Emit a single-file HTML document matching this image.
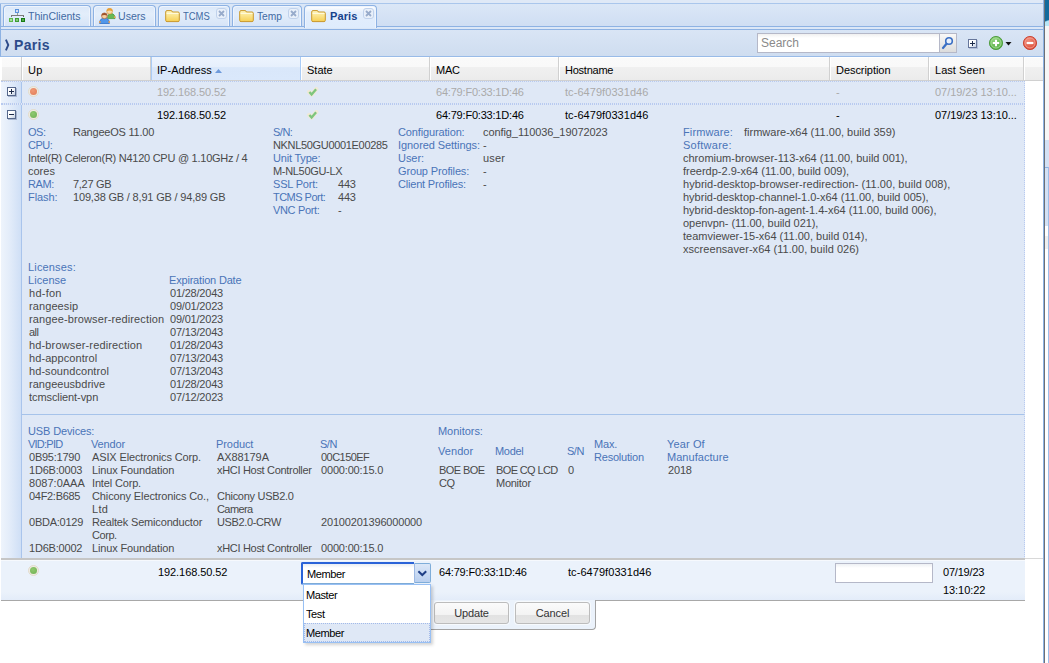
<!DOCTYPE html>
<html>
<head>
<meta charset="utf-8">
<title>Paris</title>
<style>
*{box-sizing:border-box;margin:0;padding:0}
html,body{width:1049px;height:663px;overflow:hidden;background:#fff;font-family:"Liberation Sans",sans-serif;font-size:11px;color:#000}
.abs{position:absolute}
#root{position:absolute;left:0;top:0;width:1049px;height:663px;overflow:hidden;background:#fff}
/* tab strip */
#tabhead{left:0;top:0;width:1044px;height:27px;background:#dfe9f7}
#tabline{left:0;top:3px;width:1044px;height:1px;background:#a9c6ec}
#tabstrip{left:0;top:4px;width:1044px;height:22px;background:linear-gradient(#dbe7f7,#cfdef3);border-left:1px solid #8db2e3}
#tabbot{left:0;top:26px;width:1044px;height:4px;background:#dbe7f7;border-top:1px solid #8db2e3;border-bottom:1px solid #8db2e3;border-left:1px solid #8db2e3}
.tab{position:absolute;top:5px;height:21px;border:1px solid #8db2e3;border-bottom:none;border-radius:4px 4px 0 0;background:linear-gradient(#dbe8f9,#e3eefb 40%,#d6e4f7);box-shadow:inset 1px 1px 0 #eef4fd,inset -1px 0 0 #eef4fd;color:#416aa3;font-size:11px;white-space:nowrap}
.tab.active{height:23px;background:linear-gradient(#ffffff,#e3eefc 30%,#deecfd);color:#15428b;font-weight:bold;z-index:3}
.tab .tx{position:absolute;top:4px;display:inline-block;transform-origin:0 0}
.tab svg{position:absolute}
.tclose{position:absolute;top:2px;width:11px;height:11px;border:1px solid #c0d2ec;border-radius:3px;background:#e9f0fa}
/* title bar */
#titlebar{left:0;top:30px;width:1044px;height:27px;background:linear-gradient(#d9e5f5,#cfddf0);border-left:1px solid #8db2e3;border-bottom:1px solid #99bbe8}
#title{left:14px;top:36.5px;font-size:14px;font-weight:bold;color:#2d4b8a;letter-spacing:0.3px;word-spacing:-0.5px}
/* header */
#ghead{left:1px;top:57px;width:1043px;height:24px;background:linear-gradient(#fff 0,#fff 1px,#fafafa 1px,#f9f9f9 10px,#f0f0f0 10.5px,#ebebeb 23px);border-bottom:1px solid #d0d0d0}
.hc{position:absolute;top:57px;height:23px;border-left:1px solid #fff;border-right:1px solid #d0d0d0;padding:6px 0 0 5px;font-size:11px;color:#000;white-space:nowrap}
.hc.sort{background:linear-gradient(#edf4fe 0%,#e6effc 44%,#d9e7fa 46%,#dae8fb 100%);border-left:1px solid #aaccf6;border-right:1px solid #aaccf6}

/* toolbar */
#search{left:757px;top:33px;width:183px;height:20px;background:linear-gradient(#f0f0f0,#fff 4px);border:1px solid #b5b8c8;color:#8a8a8a;font-size:12px;padding:2px 0 0 3px}
#strig{left:940px;top:33px;width:17px;height:20px;border:1px solid #b5b8c8;border-left:none;background:linear-gradient(#f8f8f8,#dcdcdc)}
/* grid */
.row{position:absolute;left:1px;width:1024px;background:#dfe8f6;border-top:1px dotted #b8caf0;border-bottom:1px dotted #b8caf0;border-right:1px dotted #b8caf0}
.exp{position:absolute;left:1px;width:21px;background:linear-gradient(90deg,#eef4fc,#e4edfa 40%,#cfdff6);border-right:1px solid #a9c4ec}
.pm{position:absolute;left:7px;width:9px;height:9px;border:1px solid #56688c;background:linear-gradient(135deg,#fff 40%,#c3cfe2);box-shadow:1px 1px 0 #a9b6cf}
.pm:before{content:"";position:absolute;left:1px;top:3px;width:5px;height:1px;background:#1d2b4a}
.pm.plus:after{content:"";position:absolute;left:3px;top:1px;width:1px;height:5px;background:#1d2b4a}
.dot{position:absolute;width:11px;height:11px;border-radius:50%;border:1px solid #e3dccb;background:#efece4}
.dot i{position:absolute;left:1px;top:1px;width:7px;height:7px;border-radius:50%}
.dot.o i{background:radial-gradient(circle at 40% 35%,#f09a77,#e07a55)}
.dot.g i{background:radial-gradient(circle at 40% 35%,#8fc86e,#6fb052)}
.t{position:absolute;z-index:2;white-space:nowrap;font-size:11px;line-height:13px;color:#000}
.gry{color:#aaa}
.l{color:#4a74b8}
.v{color:#4a4a4a}
.chk{position:absolute}

.btn{position:absolute;width:75px;height:22px;border:1px solid #bcbcbc;border-radius:3px;background:linear-gradient(#fbfbfb,#f3f3f3 58%,#e2e2e2 60%,#e6e6e6);font-size:11px;color:#333;text-align:center;line-height:20px;box-shadow:0 0 0 1px rgba(255,255,255,.6)}
.cb{font-size:11.5px;line-height:14px;color:#000;letter-spacing:-0.45px;white-space:nowrap;transform:scaleX(.96);transform-origin:0 0}
</style>
</head>
<body>
<div id="root">
<div class="abs" id="tabhead"></div>
<div class="abs" id="tabline"></div>
<div class="abs" id="tabstrip"></div>
<div class="abs" id="tabbot"></div>

<div class="tab" style="left:3px;width:88px"><svg width="17" height="14" viewBox="0 0 17 14" style="left:5px;top:3px" shape-rendering="crispEdges"><rect x="6" y="0" width="4" height="4" fill="#5b93dc"/><rect x="7" y="1" width="2" height="2" fill="#d9dcf2"/><rect x="2" y="6" width="13" height="1" fill="#7a7a7a"/><rect x="8" y="4" width="1" height="2" fill="#9a9a9a"/><rect x="2" y="7" width="1" height="1" fill="#7a7a7a"/><rect x="14" y="7" width="1" height="1" fill="#6a6a6a"/><rect x="0" y="9" width="4" height="4" fill="#5db84a"/><rect x="1" y="10" width="2" height="2" fill="#a8dc9c"/><rect x="6" y="9" width="4" height="4" fill="#3f9d33"/><rect x="7" y="10" width="2" height="2" fill="#86c878"/><rect x="12" y="9" width="4" height="4" fill="#177d14"/><rect x="13" y="10" width="2" height="2" fill="#56a84c"/></svg><span class="tx" style="left:24px;transform:scaleX(.955)">ThinClients</span></div>
<div class="tab" style="left:93px;width:63px"><svg width="17" height="16" viewBox="0 0 17 16" style="left:5px;top:2px"><path d="M8.6 10.6 Q8.4 5.6 12 5.6 Q16 5.6 16 10.6 Z" fill="#68b856" stroke="#4a9a3c" stroke-width="0.8"/><circle cx="15.8" cy="9.2" r="0.9" fill="#f0a04a"/><circle cx="10.6" cy="3.2" r="2.9" fill="#f7d9a8" stroke="#d98f2c" stroke-width="0.6"/><path d="M7.7 3.2 A2.9 2.9 0 0 1 13.5 3.2 Q10.6 1.8 7.7 3.2 Z" fill="#e8a036"/><path d="M0.6 15.5 Q0.4 10.2 5.5 10.2 Q10.6 10.2 10.4 15.5 Z" fill="#4f96ea" stroke="#2f6ec6" stroke-width="0.8"/><circle cx="0.9" cy="14" r="0.9" fill="#f0a04a"/><circle cx="10.2" cy="14" r="0.9" fill="#f0a04a"/><circle cx="5.4" cy="7.8" r="2.9" fill="#f5cfa0" stroke="#a5562b" stroke-width="0.6"/><path d="M2.5 7.8 A2.9 2.9 0 0 1 8.3 7.8 Q5.4 6.3 2.5 7.8 Z" fill="#a0522a"/></svg><span class="tx" style="left:24px;transform:scaleX(.96)">Users</span></div>
<div class="tab" style="left:158px;width:72px"><svg width="16" height="14" viewBox="0 0 16 14" style="left:6px;top:4px"><defs><linearGradient id="fg" x1="0" y1="0" x2="0" y2="1"><stop offset="0" stop-color="#fff6bf"/><stop offset="1" stop-color="#f6cf52"/></linearGradient></defs><path d="M0.7 2 Q0.7 0.6 2 0.6 L6 0.6 Q7.2 0.6 7.4 2 L13 2 Q14.3 2 14.3 3.2 L14.3 10.4 Q14.3 11.6 13 11.6 L2 11.6 Q0.7 11.6 0.7 10.4 Z" fill="url(#fg)" stroke="#c9982c" stroke-width="1"/><path d="M1.6 3.4 L13.4 3.4" stroke="#fffbe0" stroke-width="1"/></svg><span class="tx" style="left:24px;transform:scaleX(.86)">TCMS</span><div class="tclose" style="left:57px"><svg width="9" height="9" viewBox="0 0 9 9" style="left:0;top:0"><path d="M2 2 L7 7 M7 2 L2 7" stroke="#97abcb" stroke-width="1.8" fill="none"/></svg></div></div>
<div class="tab" style="left:232px;width:70px"><svg width="16" height="14" viewBox="0 0 16 14" style="left:6px;top:4px"><defs><linearGradient id="fg" x1="0" y1="0" x2="0" y2="1"><stop offset="0" stop-color="#fff6bf"/><stop offset="1" stop-color="#f6cf52"/></linearGradient></defs><path d="M0.7 2 Q0.7 0.6 2 0.6 L6 0.6 Q7.2 0.6 7.4 2 L13 2 Q14.3 2 14.3 3.2 L14.3 10.4 Q14.3 11.6 13 11.6 L2 11.6 Q0.7 11.6 0.7 10.4 Z" fill="url(#fg)" stroke="#c9982c" stroke-width="1"/><path d="M1.6 3.4 L13.4 3.4" stroke="#fffbe0" stroke-width="1"/></svg><span class="tx" style="left:24px;transform:scaleX(.93)">Temp</span><div class="tclose" style="left:55px"><svg width="9" height="9" viewBox="0 0 9 9" style="left:0;top:0"><path d="M2 2 L7 7 M7 2 L2 7" stroke="#97abcb" stroke-width="1.8" fill="none"/></svg></div></div>
<div class="tab active" style="left:304px;width:73px"><svg width="16" height="14" viewBox="0 0 16 14" style="left:6px;top:4px"><defs><linearGradient id="fg" x1="0" y1="0" x2="0" y2="1"><stop offset="0" stop-color="#fff6bf"/><stop offset="1" stop-color="#f6cf52"/></linearGradient></defs><path d="M0.7 2 Q0.7 0.6 2 0.6 L6 0.6 Q7.2 0.6 7.4 2 L13 2 Q14.3 2 14.3 3.2 L14.3 10.4 Q14.3 11.6 13 11.6 L2 11.6 Q0.7 11.6 0.7 10.4 Z" fill="url(#fg)" stroke="#c9982c" stroke-width="1"/><path d="M1.6 3.4 L13.4 3.4" stroke="#fffbe0" stroke-width="1"/></svg><span class="tx" style="left:25px;letter-spacing:0.1px">Paris</span><div class="tclose" style="left:58px"><svg width="9" height="9" viewBox="0 0 9 9" style="left:0;top:0"><path d="M2 2 L7 7 M7 2 L2 7" stroke="#97abcb" stroke-width="1.8" fill="none"/></svg></div></div>
<div class="abs" id="titlebar"></div>
<svg class="abs" width="8" height="14" viewBox="0 0 8 14" style="left:4px;top:38px"><path d="M1.9 1.6 L4.3 7 L1.9 12.4" stroke="#2d4b8a" stroke-width="1.9" fill="none"/></svg><div class="abs" id="title">Paris</div>
<div class="abs" id="ghead"></div>
<div class="hc" style="left:1px;width:21px"></div>
<div class="hc" style="left:22px;width:129px"></div>
<div class="hc sort" style="left:151px;width:150px"><svg width="8" height="5" viewBox="0 0 8 5" style="position:absolute;left:63px;top:12px"><path d="M0 4 L3.5 0 L7 4 Z" fill="#6d9adb"/></svg></div>
<div class="hc" style="left:301px;width:129px"></div>
<div class="hc" style="left:430px;width:129px"></div>
<div class="hc" style="left:559px;width:271px"></div>
<div class="hc" style="left:830px;width:99px"></div>
<div class="hc" style="left:929px;width:95px"></div>
<div class="hc" style="left:1024px;width:19px;border-right:none"></div>

<div class="row" style="top:81px;height:23px"></div>
<div class="row" style="top:104px;height:455px"></div>
<div class="exp" style="top:82px;height:21px"></div>
<div class="exp" style="top:105px;height:453px"></div>
<div class="pm plus" style="top:87px"></div>
<div class="pm" style="top:110px"></div>
<div class="dot o" style="left:28px;top:86px"><i></i></div>
<div class="dot g" style="left:28px;top:109px"><i></i></div>
<svg class="chk" width="12" height="11" viewBox="0 0 12 11" style="left:307px;top:87px"><path d="M2.2 5 L4.6 7.6 L9.3 2" stroke="#efe9d6" stroke-width="4.2" stroke-linecap="round" stroke-linejoin="round" fill="none"/><path d="M2.4 5 L4.6 7.4 L9.1 2.2" stroke="#7dc57d" stroke-width="2.3" fill="none"/></svg>
<svg class="chk" width="12" height="11" viewBox="0 0 12 11" style="left:307px;top:110px"><path d="M2.2 5 L4.6 7.6 L9.3 2" stroke="#efe9d6" stroke-width="4.2" stroke-linecap="round" stroke-linejoin="round" fill="none"/><path d="M2.4 5 L4.6 7.4 L9.1 2.2" stroke="#7dc57d" stroke-width="2.3" fill="none"/></svg>

<div class="abs" style="left:22px;top:414px;width:1002px;height:1px;background:#a6c3ea"></div>
<div class="t gry" style="left:157px;top:86px;letter-spacing:-0.11px">192.168.50.52</div>
<div class="t gry" style="left:436px;top:86px;letter-spacing:-0.20px">64:79:F0:33:1D:46</div>
<div class="t gry" style="left:565px;top:86px;letter-spacing:0.06px">tc-6479f0331d46</div>
<div class="t gry" style="left:836px;top:86px">-</div>
<div class="t gry" style="left:935px;top:86px;letter-spacing:-0.04px">07/19/23 13:10...</div>
<div class="t " style="left:157px;top:109px;letter-spacing:-0.11px">192.168.50.52</div>
<div class="t " style="left:436px;top:109px;letter-spacing:-0.20px">64:79:F0:33:1D:46</div>
<div class="t " style="left:565px;top:109px;letter-spacing:0.06px">tc-6479f0331d46</div>
<div class="t " style="left:836px;top:109px">-</div>
<div class="t " style="left:935px;top:109px;letter-spacing:-0.04px">07/19/23 13:10...</div>
<div class="t " style="left:28px;top:64px;letter-spacing:0.35px">Up</div>
<div class="t " style="left:157px;top:64px;letter-spacing:0.03px">IP-Address</div>
<div class="t " style="left:307px;top:64px">State</div>
<div class="t " style="left:436px;top:64px;letter-spacing:-0.25px">MAC</div>
<div class="t " style="left:565px;top:64px;letter-spacing:-0.24px">Hostname</div>
<div class="t " style="left:836px;top:64px;letter-spacing:-0.05px">Description</div>
<div class="t " style="left:935px;top:64px;letter-spacing:0.04px">Last Seen</div>
<div class="t l" style="left:28px;top:126px;letter-spacing:-0.45px">OS:</div>
<div class="t v" style="left:73px;top:126px;letter-spacing:-0.22px">RangeeOS 11.00</div>
<div class="t l" style="left:28px;top:139px;letter-spacing:-0.50px">CPU:</div>
<div class="t v" style="left:28px;top:152px;letter-spacing:-0.26px">Intel(R) Celeron(R) N4120 CPU @ 1.10GHz / 4</div>
<div class="t v" style="left:28px;top:165px">cores</div>
<div class="t l" style="left:28px;top:178px;letter-spacing:-0.37px">RAM:</div>
<div class="t v" style="left:73px;top:178px;letter-spacing:-0.30px">7,27 GB</div>
<div class="t l" style="left:28px;top:191px;letter-spacing:-0.08px">Flash:</div>
<div class="t v" style="left:73px;top:191px;letter-spacing:-0.18px">109,38 GB / 8,91 GB / 94,89 GB</div>
<div class="t l" style="left:273px;top:126px;letter-spacing:-0.50px">S/N:</div>
<div class="t v" style="left:273px;top:139px;letter-spacing:-0.33px">NKNL50GU0001E00285</div>
<div class="t l" style="left:273px;top:152px;letter-spacing:-0.20px">Unit Type:</div>
<div class="t v" style="left:273px;top:165px;letter-spacing:-0.32px">M-NL50GU-LX</div>
<div class="t l" style="left:273px;top:178px;letter-spacing:-0.20px">SSL Port:</div>
<div class="t v" style="left:338px;top:178px;letter-spacing:-0.20px">443</div>
<div class="t l" style="left:273px;top:191px;letter-spacing:-0.52px">TCMS Port:</div>
<div class="t v" style="left:338px;top:191px;letter-spacing:-0.20px">443</div>
<div class="t l" style="left:273px;top:204px;letter-spacing:-0.34px">VNC Port:</div>
<div class="t v" style="left:338px;top:204px">-</div>
<div class="t l" style="left:398px;top:126px;letter-spacing:-0.14px">Configuration:</div>
<div class="t v" style="left:483px;top:126px;letter-spacing:-0.08px">config_110036_19072023</div>
<div class="t l" style="left:398px;top:139px;letter-spacing:-0.07px">Ignored Settings:</div>
<div class="t v" style="left:483px;top:139px">-</div>
<div class="t l" style="left:398px;top:152px;letter-spacing:-0.05px">User:</div>
<div class="t v" style="left:483px;top:152px;letter-spacing:0.20px">user</div>
<div class="t l" style="left:398px;top:165px;letter-spacing:-0.15px">Group Profiles:</div>
<div class="t v" style="left:483px;top:165px">-</div>
<div class="t l" style="left:398px;top:178px;letter-spacing:-0.19px">Client Profiles:</div>
<div class="t v" style="left:483px;top:178px">-</div>
<div class="t l" style="left:683px;top:126px;letter-spacing:0.12px">Firmware:</div>
<div class="t v" style="left:744px;top:126px">firmware-x64 (11.00, build 359)</div>
<div class="t l" style="left:683px;top:139px;letter-spacing:0.25px">Software:</div>
<div class="t v" style="left:683px;top:152px">chromium-browser-113-x64 (11.00, build 001),</div>
<div class="t v" style="left:683px;top:165px">freerdp-2.9-x64 (11.00, build 009),</div>
<div class="t v" style="left:683px;top:178px;letter-spacing:0.05px">hybrid-desktop-browser-redirection- (11.00, build 008),</div>
<div class="t v" style="left:683px;top:191px">hybrid-desktop-channel-1.0-x64 (11.00, build 005),</div>
<div class="t v" style="left:683px;top:204px">hybrid-desktop-fon-agent-1.4-x64 (11.00, build 006),</div>
<div class="t v" style="left:683px;top:217px;letter-spacing:-0.05px">openvpn- (11.00, build 021),</div>
<div class="t v" style="left:683px;top:230px">teamviewer-15-x64 (11.00, build 014),</div>
<div class="t v" style="left:683px;top:243px;letter-spacing:0.04px">xscreensaver-x64 (11.00, build 026)</div>
<div class="t l" style="left:28px;top:261px;letter-spacing:0.16px">Licenses:</div>
<div class="t l" style="left:28px;top:274px;letter-spacing:0.05px">License</div>
<div class="t l" style="left:169px;top:274px;letter-spacing:-0.19px">Expiration Date</div>
<div class="t v" style="left:29px;top:287px;letter-spacing:0.26px">hd-fon</div>
<div class="t v" style="left:170px;top:287px;letter-spacing:-0.21px">01/28/2043</div>
<div class="t v" style="left:29px;top:300px;letter-spacing:0.09px">rangeesip</div>
<div class="t v" style="left:170px;top:300px;letter-spacing:-0.21px">09/01/2023</div>
<div class="t v" style="left:29px;top:313px;letter-spacing:0.12px">rangee-browser-redirection</div>
<div class="t v" style="left:170px;top:313px;letter-spacing:-0.21px">09/01/2023</div>
<div class="t v" style="left:29px;top:326px;letter-spacing:-0.50px">all</div>
<div class="t v" style="left:170px;top:326px;letter-spacing:-0.21px">07/13/2043</div>
<div class="t v" style="left:29px;top:339px;letter-spacing:0.15px">hd-browser-redirection</div>
<div class="t v" style="left:170px;top:339px;letter-spacing:-0.21px">01/28/2043</div>
<div class="t v" style="left:29px;top:352px;letter-spacing:0.08px">hd-appcontrol</div>
<div class="t v" style="left:170px;top:352px;letter-spacing:-0.21px">07/13/2043</div>
<div class="t v" style="left:29px;top:365px;letter-spacing:0.07px">hd-soundcontrol</div>
<div class="t v" style="left:170px;top:365px;letter-spacing:-0.21px">07/13/2043</div>
<div class="t v" style="left:29px;top:378px;letter-spacing:0.03px">rangeeusbdrive</div>
<div class="t v" style="left:170px;top:378px;letter-spacing:-0.21px">01/28/2043</div>
<div class="t v" style="left:29px;top:391px;letter-spacing:-0.08px">tcmsclient-vpn</div>
<div class="t v" style="left:170px;top:391px;letter-spacing:-0.21px">07/12/2023</div>
<div class="t l" style="left:28px;top:425px;letter-spacing:-0.13px">USB Devices:</div>
<div class="t l" style="left:28px;top:438px;letter-spacing:-0.77px">VID:PID</div>
<div class="t l" style="left:91px;top:438px;letter-spacing:-0.12px">Vendor</div>
<div class="t l" style="left:216px;top:438px;letter-spacing:-0.08px">Product</div>
<div class="t l" style="left:320px;top:438px;letter-spacing:-0.50px">S/N</div>
<div class="t v" style="left:29px;top:451px;letter-spacing:-0.24px">0B95:1790</div>
<div class="t v" style="left:92px;top:451px;letter-spacing:-0.13px">ASIX Electronics Corp.</div>
<div class="t v" style="left:217px;top:451px;letter-spacing:-0.09px">AX88179A</div>
<div class="t v" style="left:321px;top:451px;letter-spacing:-0.54px">00C150EF</div>
<div class="t v" style="left:29px;top:464px;letter-spacing:-0.20px">1D6B:0003</div>
<div class="t v" style="left:92px;top:464px;letter-spacing:-0.14px">Linux Foundation</div>
<div class="t v" style="left:217px;top:464px;letter-spacing:-0.31px">xHCI Host Controller</div>
<div class="t v" style="left:321px;top:464px;letter-spacing:-0.17px">0000:00:15.0</div>
<div class="t v" style="left:29px;top:477px;letter-spacing:0.02px">8087:0AAA</div>
<div class="t v" style="left:92px;top:477px;letter-spacing:-0.16px">Intel Corp.</div>
<div class="t v" style="left:29px;top:490px;letter-spacing:-0.30px">04F2:B685</div>
<div class="t v" style="left:92px;top:490px;letter-spacing:-0.12px">Chicony Electronics Co.,</div>
<div class="t v" style="left:217px;top:490px;letter-spacing:-0.29px">Chicony USB2.0</div>
<div class="t v" style="left:92px;top:503px;letter-spacing:0.35px">Ltd</div>
<div class="t v" style="left:217px;top:503px;letter-spacing:-0.58px">Camera</div>
<div class="t v" style="left:29px;top:516px;letter-spacing:-0.24px">0BDA:0129</div>
<div class="t v" style="left:92px;top:516px;letter-spacing:-0.17px">Realtek Semiconductor</div>
<div class="t v" style="left:217px;top:516px;letter-spacing:-0.37px">USB2.0-CRW</div>
<div class="t v" style="left:321px;top:516px;letter-spacing:-0.18px">20100201396000000</div>
<div class="t v" style="left:92px;top:529px;letter-spacing:-0.43px">Corp.</div>
<div class="t v" style="left:29px;top:542px;letter-spacing:-0.20px">1D6B:0002</div>
<div class="t v" style="left:92px;top:542px;letter-spacing:-0.14px">Linux Foundation</div>
<div class="t v" style="left:217px;top:542px;letter-spacing:-0.31px">xHCI Host Controller</div>
<div class="t v" style="left:321px;top:542px;letter-spacing:-0.17px">0000:00:15.0</div>
<div class="t l" style="left:438px;top:425px;letter-spacing:-0.04px">Monitors:</div>
<div class="t l" style="left:438px;top:445px;letter-spacing:0.06px">Vendor</div>
<div class="t l" style="left:495px;top:445px;letter-spacing:-0.32px">Model</div>
<div class="t l" style="left:567px;top:445px;letter-spacing:-0.50px">S/N</div>
<div class="t l" style="left:594px;top:438px;letter-spacing:-0.20px">Max.</div>
<div class="t l" style="left:594px;top:451px;letter-spacing:-0.21px">Resolution</div>
<div class="t l" style="left:667px;top:438px;letter-spacing:0.12px">Year Of</div>
<div class="t l" style="left:667px;top:451px;letter-spacing:0.04px">Manufacture</div>
<div class="t v" style="left:439px;top:464px;letter-spacing:-0.58px">BOE BOE</div>
<div class="t v" style="left:439px;top:477px;letter-spacing:-0.50px">CQ</div>
<div class="t v" style="left:496px;top:464px;letter-spacing:-0.63px">BOE CQ LCD</div>
<div class="t v" style="left:496px;top:477px;letter-spacing:-0.27px">Monitor</div>
<div class="t v" style="left:568px;top:464px">0</div>
<div class="t v" style="left:668px;top:464px;letter-spacing:-0.17px">2018</div>
<div class="t " style="left:158px;top:566px;letter-spacing:-0.08px">192.168.50.52</div>
<div class="t " style="left:439px;top:566px;letter-spacing:-0.20px">64:79:F0:33:1D:46</div>
<div class="t " style="left:568px;top:566px;letter-spacing:0.06px">tc-6479f0331d46</div>
<div class="t " style="left:943px;top:566px;letter-spacing:-0.20px">07/19/23</div>
<div class="t " style="left:943px;top:584px;letter-spacing:-0.06px">13:10:22</div>
<div class="abs" id="search">Search</div>
<div class="abs" id="strig"><svg width="15" height="18" viewBox="0 0 15 18" style="position:absolute;left:0;top:0"><circle cx="9" cy="7" r="3.3" fill="#e8f0fb" stroke="#3b6fc4" stroke-width="1.6"/><path d="M6.5 9.8 L3 14" stroke="#3b6fc4" stroke-width="2.2" stroke-linecap="round"/></svg></div>
<div class="pm plus" style="left:968px;top:39px;border-color:#66769b;box-shadow:1px 1px 0 #b4c0d8"></div>
<svg class="abs" width="16" height="16" viewBox="0 0 16 16" style="left:988px;top:35px"><defs><radialGradient id="gg" cx="0.4" cy="0.3" r="0.8"><stop offset="0" stop-color="#8fd37c"/><stop offset="1" stop-color="#4fa83d"/></radialGradient></defs><circle cx="8" cy="8" r="6.6" fill="url(#gg)" stroke="#4c9a3b" stroke-width="0.9"/><circle cx="8" cy="8" r="5" fill="none" stroke="#b5e3a8" stroke-width="0.9" opacity=".8"/><path d="M8 4.8 V11.2 M4.8 8 H11.2" stroke="#fff" stroke-width="2"/></svg>
<svg class="abs" width="7" height="4" viewBox="0 0 7 4" style="left:1005px;top:42px"><path d="M0.5 0 H6.5 L3.5 3.6 Z" fill="#111"/></svg>
<svg class="abs" width="16" height="16" viewBox="0 0 16 16" style="left:1022px;top:35px"><defs><radialGradient id="rg" cx="0.4" cy="0.3" r="0.8"><stop offset="0" stop-color="#f08a78"/><stop offset="1" stop-color="#d9442f"/></radialGradient></defs><circle cx="8" cy="8" r="6.6" fill="url(#rg)" stroke="#c8402e" stroke-width="0.9"/><circle cx="8" cy="8" r="5" fill="none" stroke="#f6b0a4" stroke-width="0.9" opacity=".8"/><path d="M4.6 8 H11.4" stroke="#fff" stroke-width="2.2"/></svg>

<!-- row editor -->
<div class="abs" style="left:1px;top:558px;width:1042px;height:1px;background:#d8d8d8"></div>
<div class="abs" id="edrow" style="left:1px;top:558px;width:1024px;height:43px;background:linear-gradient(#f6f9fd 0,#f6f9fd 1px,#ebf2fb 1px,#ebf2fb 80%,#e3ecf9);border-top:2px solid #c6c6c6;border-bottom:1px solid #a8a8a8"></div>
<div class="dot g" style="left:28px;top:565px"><i></i></div>
<div class="abs" style="left:427px;top:600px;width:169px;height:30px;background:#ebf2fb;border:1px solid #a3a3a3;border-top:none;border-radius:0 0 4px 4px"></div>
<div class="abs" style="left:428px;top:600px;width:167px;height:1px;background:#ebf2fb"></div>
<div class="btn" style="left:434px;top:602px"><span style="letter-spacing:-0.15px">Update</span></div>
<div class="btn" style="left:515px;top:602px"><span style="letter-spacing:-0.15px">Cancel</span></div>
<!-- combo -->
<div class="abs" style="left:301px;top:562px;width:113px;height:23px;border:2px solid #2a63d8;border-right:none;border-bottom-color:#7aa5ea;border-radius:2px 0 0 2px;background:#fff"></div>
<div class="abs" style="left:303px;top:564px;width:111px;height:20px;background:linear-gradient(#e9edf3,#fff 4px);border-bottom:1px solid #7eadd9"></div>
<div class="abs" style="left:414px;top:563px;width:17px;height:20px;background:linear-gradient(#dbe7f8,#b9cfef);border:1px solid #7eadd9;border-left:1px solid #9db9e3;border-radius:0 2px 2px 0"><svg width="11" height="8" viewBox="0 0 11 8" style="position:absolute;left:2px;top:5px"><path d="M1.4 2.2 L5.3 6 L9.2 2.2" stroke="#1f3f86" stroke-width="2" fill="none"/></svg></div>
<div class="abs cb" style="left:307px;top:567px">Member</div>
<div class="abs" style="left:303px;top:584px;width:128px;height:59px;background:#fff;border:1px solid #98c0f4;box-shadow:2px 2px 3px rgba(0,0,0,.18)"></div>
<div class="abs" style="left:304px;top:623px;width:126px;height:19px;background:#dfe8f6;border:1px dotted #a3bae9"></div>
<div class="abs cb" style="left:306px;top:588px">Master</div>
<div class="abs cb" style="left:306px;top:607px">Test</div>
<div class="abs cb" style="left:306px;top:626px">Member</div>
<!-- description input -->
<div class="abs" style="left:835px;top:563px;width:98px;height:20px;background:linear-gradient(#eef1f4,#fff 4px);border:1px solid #b5b8c8"></div>
<!-- right edge -->
<div class="abs" style="left:1043px;top:0;width:1px;height:663px;background:#8db2e3"></div>
<div class="abs" style="left:1044px;top:0;width:1px;height:663px;background:#6b7077"></div>
<div class="abs" style="left:1045px;top:0;width:4px;height:663px;background:#fff"></div>
<div class="abs" style="left:1045px;top:0;width:4px;height:18px;background:#136a9c"></div>
<div class="abs" style="left:1045px;top:18px;width:4px;height:8px;background:linear-gradient(160deg,#136a9c 30%,#b8e6f7 45%)"></div>
<div class="abs" style="left:1045px;top:26px;width:4px;height:114px;background:#f6f6f6"></div>
<div class="abs" style="left:1045px;top:140px;width:4px;height:86px;background:#d4e1f4"></div>
<div class="abs" style="left:1045px;top:167px;width:4px;height:1px;background:#8db2e3"></div>
<div class="abs" style="left:1048px;top:167px;width:1px;height:496px;background:#9dbde9"></div>
<div class="abs" style="left:1045px;top:236px;width:3px;height:13px;background:#efefef"></div>
</div>
</body>
</html>
